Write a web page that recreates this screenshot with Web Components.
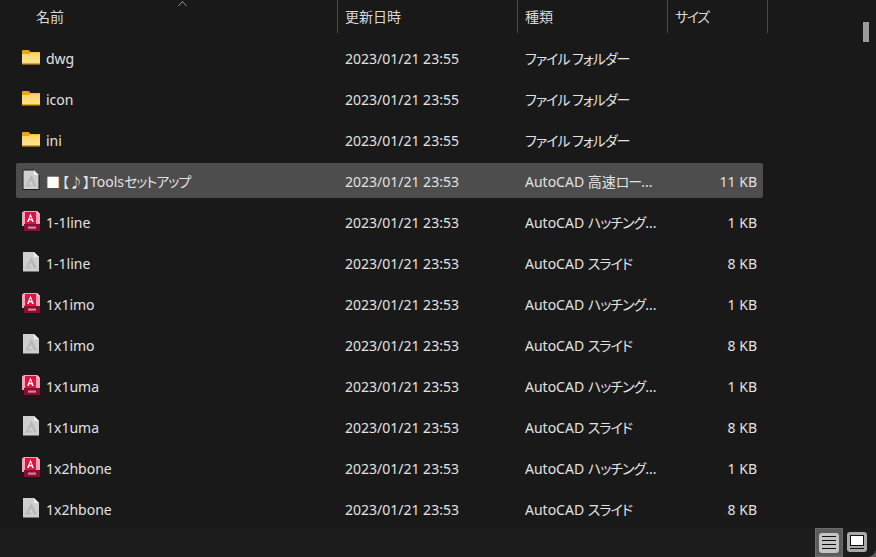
<!DOCTYPE html>
<html>
<head>
<meta charset="utf-8">
<style>
  html, body { margin: 0; height: 100%; background: #191919; overflow: hidden; }
</style>
</head>
<body>
<file-explorer>
  <file-row kind="folder" name="dwg" date="2023/01/21 23:55" type="ファイル フォルダー"></file-row>
  <file-row kind="folder" name="icon" date="2023/01/21 23:55" type="ファイル フォルダー"></file-row>
  <file-row kind="folder" name="ini" date="2023/01/21 23:55" type="ファイル フォルダー"></file-row>
  <file-row kind="slide" selected name="■【♪】Toolsセットアップ" date="2023/01/21 23:53" type="AutoCAD 高速ロー..." size="11 KB"></file-row>
  <file-row kind="pat" name="1-1line" date="2023/01/21 23:53" type="AutoCAD ハッチング..." size="1 KB"></file-row>
  <file-row kind="slide" name="1-1line" date="2023/01/21 23:53" type="AutoCAD スライド" size="8 KB"></file-row>
  <file-row kind="pat" name="1x1imo" date="2023/01/21 23:53" type="AutoCAD ハッチング..." size="1 KB"></file-row>
  <file-row kind="slide" name="1x1imo" date="2023/01/21 23:53" type="AutoCAD スライド" size="8 KB"></file-row>
  <file-row kind="pat" name="1x1uma" date="2023/01/21 23:53" type="AutoCAD ハッチング..." size="1 KB"></file-row>
  <file-row kind="slide" name="1x1uma" date="2023/01/21 23:53" type="AutoCAD スライド" size="8 KB"></file-row>
  <file-row kind="pat" name="1x2hbone" date="2023/01/21 23:53" type="AutoCAD ハッチング..." size="1 KB"></file-row>
  <file-row kind="slide" name="1x2hbone" date="2023/01/21 23:53" type="AutoCAD スライド" size="8 KB"></file-row>
</file-explorer>

<script>
const ICONS = {
    folder: `<svg width="20" height="22" viewBox="0 0 20 22">
        <defs><linearGradient id="fg" x1="0" y1="0" x2="0" y2="1"><stop offset="0" stop-color="#fdd262"/><stop offset="1" stop-color="#ffe596"/></linearGradient></defs>
        <path d="M1 5a1 1 0 0 1 1-1h5.500l2 2H19v3H1z" fill="#eba60f"/>
        <path d="M1 8h7l1.500-1.500H19V18H1z" fill="url(#fg)"/>
        <rect x="1" y="17" width="18" height="1.500" fill="#e8a412"/>
    </svg>`,
    slide: `<svg width="20" height="22" viewBox="0 0 20 22">
        <path d="M2 1h11l5 5v14.500H2z" fill="#cfcfcf"/>
        <path d="M13 1v5h5z" fill="#f0f0f0"/>
        <path d="M10.500 5.500l5.500 12h-3.200l-2.300-6-4 4.200h3.500l.8 1.800H4z" fill="#b9b9b9"/>
    </svg>`,
    pat: `<svg width="20" height="22" viewBox="0 0 20 22">
        <path d="M1 2.500L3 1h13l3 3v10H3v2H1z" fill="#f4a3b8"/>
        <path d="M16 1v3h3z" fill="#fbd5df"/>
        <rect x="4" y="2" width="11" height="12" fill="#e2123f"/>
        <path d="M9.500 3.500l3.300 8.500h-1.700l-.6-1.800H8.300L7.700 12H6zM8.800 8.700h1.500L9.550 6.400z" fill="#fff" fill-rule="evenodd"/>
        <rect x="3" y="14" width="16" height="7" fill="#8b0d2f"/>
        <rect x="7" y="16.500" width="8" height="2.200" fill="#c98a9e"/>
    </svg>`
};

// the reference's kana are narrower than the installed CJK font, tighten the runs
const tightenKana = text => text.replace(/[ァ-ヶー][ァ-ヶー ]*/g, run => `<span class="kana">${run}</span>`);

class FileRow extends HTMLElement {
    constructor() {
        super();
        this.attachShadow({ mode: 'open' });
    }

    connectedCallback() {
        const kind = this.getAttribute('kind');
        const name = tightenKana(this.getAttribute('name')).replace('■', '<span class="mark">■</span>');
        this.shadowRoot.innerHTML = `
            <style>
                :host {
                    display: grid;
                    grid-template-columns: 30px 299px 180px 150px 82px;
                    align-items: center;
                    height: 35px;
                    margin-bottom: 6px;
                    border-radius: 2px;
                    color: #e2e2e2;
                    line-height: 20px;
                    font-feature-settings: "palt";
                }
                :host([selected]) { background: #4d4d4d; }
                .icon { display: flex; justify-content: center; height: 22px; margin-top: -1px; }
                .icon svg { display: block; }
                :host([selected]) svg path:first-child { stroke: #1c1c1c; stroke-width: 1; }
                .text { padding-top: 2px; }
                .size { text-align: right; }
                .name { white-space: nowrap; }
                .mark { color: #fff; margin-right: 2px; }
                .kana { letter-spacing: -1px; }
            </style>
            <span class="icon">${ICONS[kind]}</span>
            <span class="text name">${name}</span>
            <span class="text">${this.getAttribute('date')}</span>
            <span class="text">${tightenKana(this.getAttribute('type'))}</span>
            <span class="text size">${this.getAttribute('size') || ''}</span>
        `;
    }
}

class ViewButton extends HTMLElement {
    constructor() {
        super();
        this.attachShadow({ mode: 'open' });
    }

    connectedCallback() {
        const details = this.hasAttribute('active');
        this.shadowRoot.innerHTML = `
            <style>
                :host {
                    display: flex;
                    align-items: center;
                    justify-content: center;
                    width: 28px;
                    height: 29px;
                    box-sizing: border-box;
                    padding-bottom: 1px;
                }
                :host([active]) { background: #5c5c5c; border: 1px solid #6c6c6c; padding: 1px 0 0; }
                .face {
                    width: 20px;
                    height: 20px;
                    border-radius: 3px;
                    background: ${details ? '#c4c4c4' : '#a9a9a9'};
                }
                svg { display: block; }
            </style>
            <div class="face">
                ${details
                    ? `<svg width="20" height="20"><path d="M3 3.500h14M3 7.500h14M3 11.500h14M3 15.500h14" stroke="#111" stroke-width="1"/></svg>`
                    : `<svg width="20" height="20"><rect x="3.500" y="3.500" width="13" height="10" fill="#fff" stroke="#111"/><path d="M3 16.500h14" stroke="#111"/></svg>`}
            </div>
        `;
    }
}

class FileExplorer extends HTMLElement {
    constructor() {
        super();
        this.attachShadow({ mode: 'open' });
    }

    connectedCallback() {
        this.shadowRoot.innerHTML = `
            <style>
                :host {
                    display: flex;
                    flex-direction: column;
                    position: relative;
                    width: 876px;
                    height: 557px;
                    overflow: hidden;
                    background: #191919;
                    color: #e2e2e2;
                    font: 14px "Noto Sans", "Noto Sans CJK JP", sans-serif;
                }
                header {
                    display: grid;
                    grid-template-columns: 338px 180px 150px 100px;
                    height: 33px;
                    position: relative;
                    flex: none;
                    line-height: 20px;
                    font-feature-settings: "palt";
                }
                header div {
                    display: flex;
                    align-items: center;
                    padding-left: 7px;
                    border-right: 1px solid #4a4a4a;
                    color: #d8d8d8;
                    box-sizing: border-box;
                }
                header div:first-child { padding-left: 36px; }
                header div:nth-child(4) { letter-spacing: -1.5px; }
                .sort { position: absolute; left: 178px; top: 0; }
                .list { flex: 1; padding: 7px 113px 0 16px; overflow: hidden; }
                .thumb {
                    position: absolute;
                    left: 863px;
                    top: 22px;
                    width: 6px;
                    height: 20px;
                    background: #9b9b9b;
                }
                footer {
                    flex: none;
                    height: 29px;
                    background: #1c1c1c;
                    display: flex;
                    justify-content: flex-end;
                    padding-right: 5px;
                }
                .corner {
                    position: absolute;
                    right: 0;
                    bottom: 0;
                    width: 8px;
                    height: 8px;
                    background: radial-gradient(circle at 0 0, transparent 7.500px, #5a5a5a 8px);
                }
            </style>
            <header>
                <div>名前</div>
                <div>更新日時</div>
                <div>種類</div>
                <div>サイズ</div>
                <svg class="sort" width="10" height="7"><path d="M.5 6L4.500 1.500 8.500 6" fill="none" stroke="#9a9a9a"/></svg>
            </header>
            <div class="list"><slot></slot></div>
            <footer>
                <view-button active></view-button>
                <view-button></view-button>
            </footer>
            <div class="thumb"></div>
            <div class="corner"></div>
        `;
    }
}

customElements.define('file-row', FileRow);
customElements.define('view-button', ViewButton);
customElements.define('file-explorer', FileExplorer);
</script>
</body>
</html>
